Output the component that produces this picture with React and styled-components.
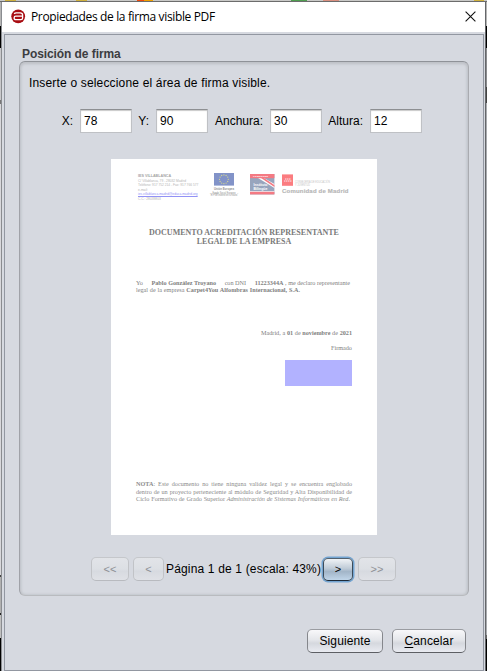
import React from "react";
import styled, { createGlobalStyle } from "styled-components";

const Global = createGlobalStyle`
  * { box-sizing: border-box; }
  body { margin: 0; overflow: hidden; background: #d6d9e0; }
`;

const Desktop = styled.div`
  width: 487px;
  height: 671px;
  display: grid;
  grid-template-columns: 2px 483px 2px;
  grid-template-rows: 2px 669px;
  font: 12px/14px "Liberation Sans", Arial, sans-serif;
  color: #000;
`;

const TopStrip = styled.div`
  grid-column: 1 / -1;
  border-bottom: 1px solid #6c6c6c;
  background: linear-gradient(90deg,
    #c9c9c7 5px, #d0b13d 5px 16px, #c9c9c7 16px 76px, #d0b13d 76px 87px,
    #c9c9c7 87px 137px, #f04a0c 137px 144px, #f0a000 144px 153px, #c9c9c7 153px 291px,
    #4f9e50 291px 307px, #c9c9c7 307px 323px, #d99080 323px 339px, #c9c9c7 339px 474px,
    #d0b13d 474px 484px, #c9c9c7 484px);
`;

const LeftEdge = styled.div`
  border-right: 1px solid #8a8c90;
  background: linear-gradient(#b5b5b5 24px, #000 24px 46px, #c9c9cc 46px 98px,
    #777 98px 102px, #d8d8dc 102px 573px, #444 573px 575px, #b0b0b0 575px 611px,
    #222 611px 613px, #c0c0c0 613px 636px, #000 636px);
`;

const RightEdge = styled.div`
  border-left: 1px solid #65676a;
  background: linear-gradient(#b5b5b5 24px, #000 24px 46px, #8c8d90 46px 85px,
    #444 85px 101px, #a9abaf 101px 633px, #666 633px 637px, #000 637px);
`;

const Dialog = styled.div`
  display: flex;
  flex-direction: column;
  background: #d6d9e0;
`;

const TitleBar = styled.header`
  height: 30px;
  flex: none;
  display: flex;
  align-items: center;
  padding: 0 9px 1px 9px;
  background: #fff;
`;

const Title = styled.h1`
  flex: 1;
  margin: 1px 0 0 5px;
  font: 400 12px/16px "Open Sans", "Noto Sans", sans-serif;
  letter-spacing: -0.36px;
`;

const Body = styled.main`
  flex: none;
  width: 480px;
  height: 637px;
  margin: 2px 0 0 2px;
  border: 1px solid #9297a1;
  padding: 12px 14px 0;
  display: flex;
  flex-direction: column;
`;

const Legend = styled.h2`
  margin: 0 0 0 3px;
  height: 14px;
  font: 700 12px/14px "Liberation Sans", Arial, sans-serif;
  letter-spacing: -0.08px;
  color: #3c3d40;
`;

const Panel = styled.section`
  height: 535px;
  width: 450px;
  flex: none;
  display: flex;
  flex-direction: column;
  align-items: center;
  border: 1px solid;
  border-color: #8f9298 #a9abb0 #b9bbbf #a0a2a8;
  border-radius: 6px;
  box-shadow: inset 0 2px 3px #bfc2c8, inset 1px 0 3px #c2c5cb, inset -1px 0 3px #c2c5cb;
`;

const Intro = styled.p`
  align-self: flex-start;
  margin: 14px 0 0 9px;
  letter-spacing: 0.17px;
`;

const Fields = styled.div`
  display: flex;
  align-items: center;
  margin-top: 18px;
  height: 25px;
`;

const Field = styled.label`
  display: flex;
  align-items: center;
  justify-content: flex-end;
  width: ${(p) => p.$w}px;
  white-space: nowrap;
`;

const Input = styled.input`
  width: 52px;
  height: 24px;
  margin: 0 0 0 7px;
  flex: none;
  padding: 1px 3px 0;
  border: 1px solid #bfc1c5;
  border-top-color: #8d8f92;
  border-radius: 0;
  outline: none;
  background: #fff;
  box-shadow: inset 0 1px 1px #c9c9c9;
  font: 12px/14px "Liberation Sans", Arial, sans-serif;
  color: #000;
`;

const Paper = styled.article`
  width: 266px;
  height: 376px;
  flex: none;
  margin: 26px 0 0 0;
  padding: 14px 25px 0;
  display: flex;
  flex-direction: column;
  background: #fff;
  font: 6.2px/7.3px "Liberation Serif", "Times New Roman", serif;
  color: #808080;
`;

const Letterhead = styled.div`
  display: flex;
  height: 34px;
`;

const School = styled.address`
  width: 72px;
  padding: 1px 0 0 2px;
  font: 3.25px/4.6px "Liberation Sans", Arial, sans-serif;
  color: #b4b4b4;
  white-space: nowrap;
  b { font-size: 3.7px; color: #a5a5a5; }
  u { color: #9292f6; }
`;

const Logos = styled.svg`
  display: block;
  flex: none;
  font-family: "Liberation Sans", Arial, sans-serif;
`;

const Heading = styled.h3`
  margin: 21px 0 0;
  font: 700 8px/9px "Liberation Serif", "Times New Roman", serif;
  color: #7a7a7a;
  text-align: center;
`;

const Line = styled.div`
  width: ${(p) => p.$w}px;
  height: 7.2px;
  margin-top: ${(p) => p.$top || 0}px;
  align-self: ${(p) => (p.$end ? "flex-end" : "flex-start")};
  text-align: justify;
  text-align-last: justify;
  white-space: nowrap;
`;

const Declaration = styled.div`
  display: flex;
  justify-content: space-between;
  width: 214px;
  height: 7.2px;
  margin-top: 33px;
  white-space: nowrap;
`;

const SignatureArea = styled.div`
  width: 67px;
  height: 26px;
  flex: none;
  align-self: flex-end;
  margin: 9px 0 0;
  background: #b2b2ff;
`;

const Note = styled.div`
  margin-top: auto;
  margin-bottom: 33px;
  color: #8b8b8b;
`;

const Pager = styled.div`
  display: flex;
  align-items: center;
  margin: 22px 0 0;
  width: 306px;
  height: 24px;
`;

const Button = styled.button`
  width: ${(p) => p.$w}px;
  height: 24px;
  flex: none;
  padding: 0;
  border: 1px solid;
  border-color: #9a9ca1 #85878c #5d5f64;
  border-radius: 5px;
  background: linear-gradient(#f8f8fa, #e4e6ea 45%, #d5d8de 60%, #e9ebf1);
  font: 12px/14px "Liberation Sans", Arial, sans-serif;
  letter-spacing: 0.12px;
  color: #000;
  u { text-underline-offset: 2px; }
`;

const PagerButton = styled(Button)`
  color: #8e9095;
  font-size: 11px;
  border-color: #c5c7cb #c1c3c7 #b8babf;
  background: linear-gradient(#e2e4e8, #dcdfe4 50%, #d7dae0 60%, #dfe1e6);
  margin-right: ${(p) => p.$gap || 0}px;
`;

const FocusedButton = styled(Button)`
  width: 30px;
  height: 23px;
  margin: 0 5px 0 2px;
  border-color: #53616e #3c4b59 #1d2b39;
  background: linear-gradient(#f0f3f6, #bfcbd7 45%, #a2b5c8 60%, #c0d5e9);
  box-shadow: 0 0 0 1.5px #73a4d1;
  font-size: 11px;
`;

const PageLabel = styled.span`
  width: 155px;
  white-space: nowrap;
  letter-spacing: 0.16px;
`;

const Actions = styled.footer`
  display: flex;
  gap: 9px;
  justify-content: flex-end;
  margin: 33px 3px 0 0;
`;

const stars = Array.from({ length: 12 }, (_, i) => {
  const a = (i * Math.PI) / 6;
  return [13.9 + 4.4 * Math.sin(a), 6.3 + 4.4 * Math.cos(a)];
});

function AppIcon() {
  return (
    <svg width="15" height="15" viewBox="0 0 15 15">
      <circle cx="7.2" cy="7.3" r="6.9" fill="#a80c12" />
      <path d="M3.2 4.9q.6-1 2-1h4q2.4 0 2.4 2.2v2.8q0 1.7-1.7 1.7H4.8q-1.7 0-1.7-1.7T4.8 7.2h6.8" fill="none" stroke="#fff" strokeWidth="1.3" />
    </svg>
  );
}

function CloseIcon() {
  return (
    <svg width="11" height="11" viewBox="0 0 11 11">
      <path d="M.6.6l9.8 9.8M10.4.6L.6 10.4" stroke="#111" strokeWidth="1.1" />
    </svg>
  );
}

function LetterheadLogos() {
  return (
    <Logos width="144" height="28" viewBox="0 0 144 28">
      <rect x="6" y="0" width="20" height="12.6" fill="#8293c8" />
      {stars.map(([x, y], i) => (
        <circle key={i} cx={x + 2} cy={y} r=".65" fill="#d7d98f" />
      ))}
      <g fill="#8e8e8e" fontSize="3" textAnchor="middle">
        <text x="16" y="17" fontSize="3.1" fontWeight="700" textLength="20" lengthAdjust="spacingAndGlyphs">Unión Europea</text>
        <text x="16" y="20.7" textLength="23" lengthAdjust="spacingAndGlyphs">Fondo Social Europeo</text>
        <text x="16" y="23.3" textLength="28" lengthAdjust="spacingAndGlyphs">“El FSE invierte en tu futuro”</text>
      </g>
      <rect x="42" y="1" width="24.4" height="20.4" fill="#98a5bd" />
      <path d="M50 5h6l10.4 6v4z" fill="#fff" />
      <path d="M53 5h3l10.4 7v2z" fill="#f47a83" />
      <rect x="42" y="1" width="24.4" height="4.2" fill="#f47a83" />
      <rect x="42" y="18" width="24.4" height=".8" fill="#fff" />
      <rect x="42" y="18.8" width="24.4" height="2.6" fill="#f47a83" />
      <g fill="#fff" fontSize="4.2" fontWeight="700">
        <text x="45.5" y="13.2" textLength="14" lengthAdjust="spacingAndGlyphs">Instituto</text>
        <text x="45.5" y="17.2" textLength="14" lengthAdjust="spacingAndGlyphs">Bilingüe</text>
        <text x="45" y="4.1" fontSize="2.4" textLength="15">Comunidad</text>
      </g>
      <rect x="74" y="1.4" width="11" height="11.4" fill="#fb7c80" />
      <g fill="#fff" textAnchor="middle">
        <text x="79.5" y="6.8" fontSize="3" textLength="6" lengthAdjust="spacingAndGlyphs">★★★</text>
        <text x="79.5" y="9.4" fontSize="3" textLength="8" lengthAdjust="spacingAndGlyphs">★★★★</text>
      </g>
      <g fill="#c5c5c5" fontSize="2.7">
        <text x="87" y="10.2" textLength="35" lengthAdjust="spacingAndGlyphs">CONSEJERÍA DE EDUCACIÓN</text>
        <text x="87" y="12.9" textLength="15" lengthAdjust="spacingAndGlyphs">Y JUVENTUD</text>
      </g>
      <text x="74" y="19.6" fill="#b6b6b6" stroke="#b6b6b6" strokeWidth=".15" fontSize="6" fontWeight="700" textLength="66.5">Comunidad de Madrid</text>
    </Logos>
  );
}

export default function App() {
  return (
    <Desktop>
      <Global />
      <TopStrip />
      <LeftEdge />
      <Dialog>
        <TitleBar>
          <AppIcon />
          <Title>Propiedades de la firma visible PDF</Title>
          <CloseIcon />
        </TitleBar>
        <Body>
          <Legend>Posición de firma</Legend>
          <Panel>
            <Intro>Inserte o seleccione el área de firma visible.</Intro>
            <Fields>
              <Field $w={66}>X:<Input defaultValue="78" /></Field>
              <Field $w={76}>Y:<Input defaultValue="90" /></Field>
              <Field $w={114}>Anchura:<Input defaultValue="30" /></Field>
              <Field $w={100}>Altura:<Input defaultValue="12" /></Field>
            </Fields>
            <Paper>
              <Letterhead>
                <School>
                  <b>IES VILLABLANCA</b><br />
                  C/ Villablanca, 79 - 28032 Madrid<br />
                  Teléfono: 917 752 214 - Fax: 917 766 577<br />
                  e-mail:<br />
                  <u>ies.villablanca.madrid@educa.madrid.org</u><br />
                  C.C.: 28039803
                </School>
                <LetterheadLogos />
              </Letterhead>
              <Heading>DOCUMENTO ACREDITACIÓN REPRESENTANTE<br />LEGAL DE LA EMPRESA</Heading>
              <Declaration>
                <span>Yo</span>
                <b>Pablo González Troyano</b>
                <span>con DNI</span>
                <span><b>11223344A</b> , me declaro representante</span>
              </Declaration>
              <Line $w={164}>legal de la empresa <b>Carpet4You Alfombras Internacional, S.A.</b></Line>
              <Line $w={91} $end $top={36}>Madrid, a <b>01</b> de <b>noviembre</b> de <b>2021</b></Line>
              <Line $w={21} $end $top={7}>Firmado</Line>
              <SignatureArea />
              <Note>
                <Line $w={216}><b>NOTA</b>: Este documento no tiene ninguna validez legal y se encuentra englobado</Line>
                <Line $w={216}>dentro de un proyecto perteneciente al módulo de Seguridad y Alta Disponibilidad de</Line>
                <Line $w={214}>Ciclo Formativo de Grado Superior <i>Administración de Sistemas Informáticos en Red</i>.</Line>
              </Note>
            </Paper>
            <Pager>
              <PagerButton $w={38} $gap={4} disabled>&lt;&lt;</PagerButton>
              <PagerButton $w={31} $gap={2} disabled>&lt;</PagerButton>
              <PageLabel>Página 1 de 1 (escala: 43%)</PageLabel>
              <FocusedButton>&gt;</FocusedButton>
              <PagerButton $w={38} disabled>&gt;&gt;</PagerButton>
            </Pager>
          </Panel>
          <Actions>
            <Button $w={76}>Siguiente</Button>
            <Button $w={74}><u>C</u>ancelar</Button>
          </Actions>
        </Body>
      </Dialog>
      <RightEdge />
    </Desktop>
  );
}
